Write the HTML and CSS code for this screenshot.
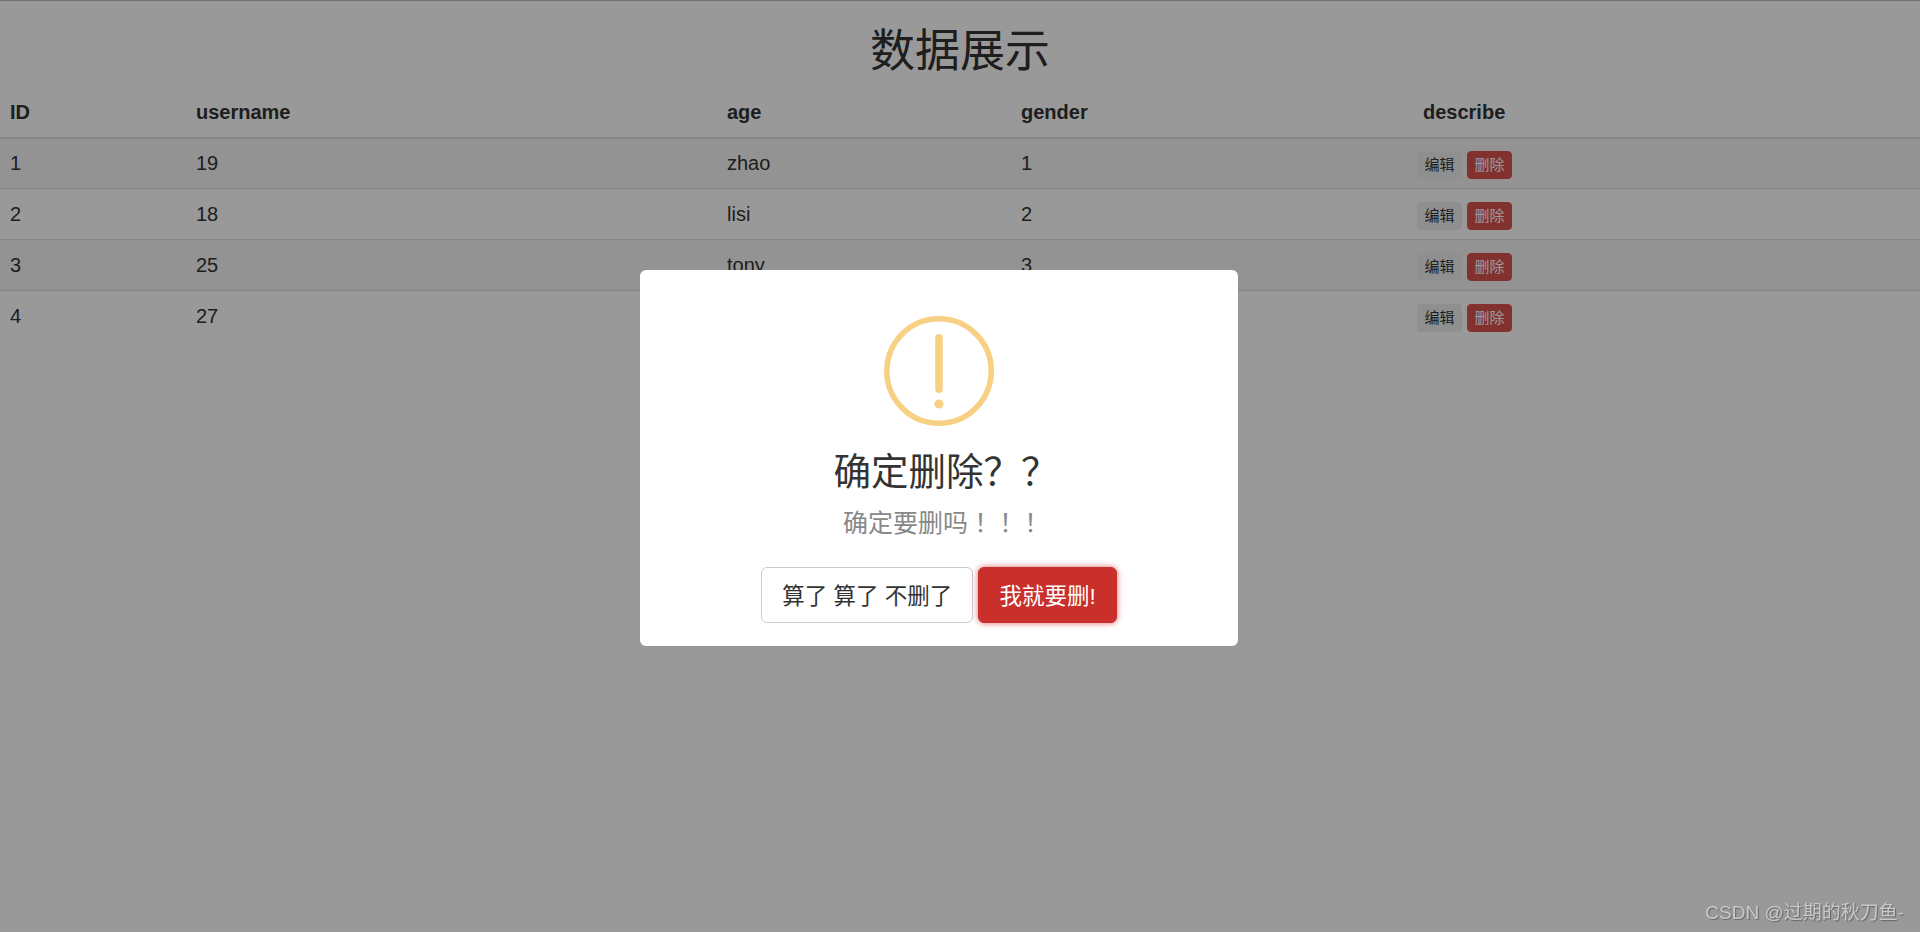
FILE: index.html
```html
<!DOCTYPE html>
<html lang="en">
<head>
    <meta charset="UTF-8">
    <meta name="viewport" content="width=device-width, initial-scale=1.0">
    <title>数据展示</title>
    <link rel="stylesheet" href="styles.css">
</head>
<body>
    <h1 class="page-title">数据展示</h1>
    <table class="data-table">
        <thead>
            <tr>
                <th class="col-id">ID</th>
                <th class="col-username">username</th>
                <th class="col-age">age</th>
                <th class="col-gender">gender</th>
                <th class="col-describe">describe</th>
            </tr>
        </thead>
        <tbody>
            <tr>
                <td>1</td><td>19</td><td>zhao</td><td>1</td>
                <td class="cell-actions"><button class="btn-xs btn-edit">编辑</button><button class="btn-xs btn-delete">删除</button></td>
            </tr>
            <tr>
                <td>2</td><td>18</td><td>lisi</td><td>2</td>
                <td class="cell-actions"><button class="btn-xs btn-edit">编辑</button><button class="btn-xs btn-delete">删除</button></td>
            </tr>
            <tr>
                <td>3</td><td>25</td><td>tony</td><td>3</td>
                <td class="cell-actions"><button class="btn-xs btn-edit">编辑</button><button class="btn-xs btn-delete">删除</button></td>
            </tr>
            <tr>
                <td>4</td><td>27</td><td>wang</td><td>4</td>
                <td class="cell-actions"><button class="btn-xs btn-edit">编辑</button><button class="btn-xs btn-delete">删除</button></td>
            </tr>
        </tbody>
    </table>

    <!-- Overlay -->
    <div class="overlay"></div>

    <!-- Confirm dialog -->
    <div class="modal">
        <svg class="modal-icon" width="110" height="110" viewBox="0 0 110 110">
            <circle cx="55" cy="55" r="52.2" fill="none" stroke="#f8d084" stroke-width="5.6"/>
            <rect x="51.2" y="18" width="7.6" height="59" rx="3.8" fill="#f8d084"/>
            <circle cx="55" cy="88" r="4.6" fill="#f8d084"/>
        </svg>
        <h2 class="modal-title">确定删除？？</h2>
        <p class="modal-text">确定要删吗<span class="mark-centered">！！！</span></p>
        <div class="modal-actions">
            <button class="btn-cancel">算了 算了 不删了</button>
            <button class="btn-confirm">我就要删!</button>
        </div>
    </div>

    <div class="watermark">CSDN @过期的秋刀鱼-</div>
</body>
</html>
```

FILE: styles.css
```css
body {
    font-family: "Liberation Sans", "Noto Sans CJK SC", sans-serif;
    font-size: 20px;
    color: #333;
    margin: 0;
    height: 932px;
    overflow: hidden;
    background-color: white;
    border-top: 1px solid #bbb;
}
.page-title {
    font-size: 45px;
    font-weight: 400;
    line-height: 50px;
    text-align: center;
    margin: 26px 0 13px;
}
.data-table {
    width: 100%;
    border-collapse: collapse;
    table-layout: fixed;
}
.data-table th, .data-table td {
    padding: 10px;
    line-height: 25px;
    text-align: left;
    border-top: 1px solid #ddd;
}
.data-table th {
    font-weight: bold;
    border-top: none;
    border-bottom: 2px solid #ddd;
    padding-bottom: 12px;
}
.data-table td {
    vertical-align: middle;
}
.data-table td.cell-actions {
    padding-bottom: 9px;
    line-height: 0;
    vertical-align: top;
}
.data-table tbody tr:nth-child(odd) {
    background-color: #f5f5f5;
}
.data-table tbody tr:first-child .btn-xs {
    margin-top: 2px;
}
.col-id { width: 166px; }
.col-username { width: 511px; }
.col-age { width: 274px; }
.col-gender { width: 376px; }
.data-table th.col-describe { padding-left: 16px; }
.btn-xs {
    font-family: inherit;
    font-size: 15px;
    line-height: 22px;
    width: 45px;
    height: 28px;
    padding: 0;
    margin: 3px 5px 0 0;
    border: 1px solid transparent;
    border-radius: 4px;
    vertical-align: top;
}
.btn-edit {
    background-color: #eee;
    color: #333;
}
.btn-delete {
    background-color: #d9534f;
    border-color: #d9534f;
    color: white;
}
.overlay {
    position: fixed;
    top: 0;
    left: 0;
    width: 100%;
    height: 100%;
    background-color: rgba(0, 0, 0, 0.4);
}
.modal {
    position: fixed;
    top: 270px;
    left: 640px;
    width: 598px;
    height: 376px;
    box-sizing: border-box;
    padding-top: 46px;
    display: flex;
    flex-direction: column;
    align-items: center;
    background-color: white;
    border-radius: 6px;
}
.modal-icon {
    display: block;
    flex: none;
}
.modal-title {
    font-size: 37.5px;
    font-weight: 400;
    line-height: 50px;
    color: #333;
    margin: 21px 0 0;
    padding-left: 14px;
}
.modal-text {
    font-size: 25px;
    line-height: 35px;
    color: #888;
    margin: 9px 0 0;
    padding-left: 8px;
}
.mark-centered {
    font-family: "Liberation Sans", "Noto Sans CJK TC", sans-serif;
}
.modal-actions {
    display: flex;
    gap: 5px;
    margin-top: 26px;
}
.btn-cancel, .btn-confirm {
    font-family: inherit;
    font-size: 22.5px;
    height: 56px;
    padding: 0 20px 2px;
    border-radius: 6px;
    white-space: nowrap;
}
.btn-cancel {
    background-color: white;
    border: 1px solid #ccc;
    color: #333;
}
.btn-confirm {
    background-color: #c92f2b;
    border: 1px solid #c92f2b;
    color: white;
    box-shadow: 0 0 6px rgba(201, 47, 43, 0.7);
}
.watermark {
    position: fixed;
    right: 16px;
    bottom: 6px;
    font-size: 19px;
    line-height: 26px;
    color: #c8c8c8;
    text-shadow: 1px 1px 1px rgba(0, 0, 0, 0.35);
}
```
